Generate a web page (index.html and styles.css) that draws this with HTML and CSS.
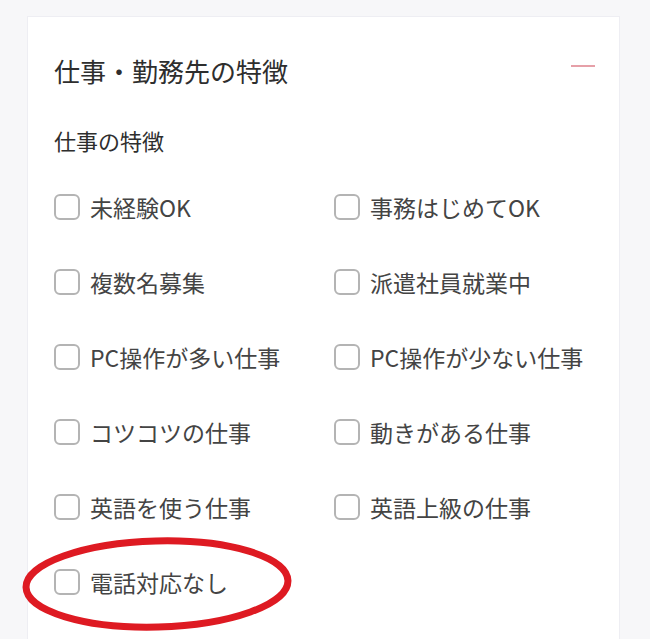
FILE: index.html
```html
<!DOCTYPE html>
<html lang="ja">
  <head>
    <meta charset="UTF-8" />
    <meta name="viewport" content="width=device-width, initial-scale=1.0" />
    <title>仕事・勤務先の特徴</title>
    <link rel="stylesheet" href="styles.css">
  </head>
  <body>
    <section class="card">
      <div class="card-head">
        <h2>仕事・勤務先の特徴</h2>
        <button type="button" class="toggle" aria-label="閉じる"></button>
      </div>

      <h3>仕事の特徴</h3>

      <div class="options">
        <label class="option"><input type="checkbox" name="feature" value="1" />未経験OK</label>
        <label class="option"><input type="checkbox" name="feature" value="2" />事務はじめてOK</label>
        <label class="option"><input type="checkbox" name="feature" value="3" />複数名募集</label>
        <label class="option"><input type="checkbox" name="feature" value="4" />派遣社員就業中</label>
        <label class="option"><input type="checkbox" name="feature" value="5" />PC操作が多い仕事</label>
        <label class="option"><input type="checkbox" name="feature" value="6" />PC操作が少ない仕事</label>
        <label class="option"><input type="checkbox" name="feature" value="7" />コツコツの仕事</label>
        <label class="option"><input type="checkbox" name="feature" value="8" />動きがある仕事</label>
        <label class="option"><input type="checkbox" name="feature" value="9" />英語を使う仕事</label>
        <label class="option"><input type="checkbox" name="feature" value="10" />英語上級の仕事</label>
        <label class="option marked">
          <input type="checkbox" name="feature" value="11" />電話対応なし
          <!-- 赤丸の注釈 -->
          <svg class="circle" width="272" height="96" viewBox="0 0 272 96">
            <ellipse cx="136" cy="48" rx="131" ry="43" transform="rotate(-1.5 136 48)" />
          </svg>
        </label>
      </div>
    </section>
  </body>
</html>
```

FILE: styles.css
```css
html,
body {
  height: 100%;
}
body {
  margin: 0;
  padding: 16px 0 0 27px;
  box-sizing: border-box;
  background-color: #f7f7f9;
  font-family: "Noto Sans CJK JP", "Noto Sans", sans-serif;
  color: #333;
  overflow: hidden;
}
.card {
  width: 593px;
  height: 100%;
  background-color: white;
  border: 1px solid #eeeef3;
  border-bottom: none;
  box-sizing: border-box;
  padding: 39px 24px 0 26px;
}
.card-head {
  display: flex;
  justify-content: space-between;
  align-items: center;
  height: 30px;
}
.card-head h2 {
  margin: 0;
  font-size: 26px;
  font-weight: 400;
  line-height: 30px;
  color: #2e2e2e;
}
.toggle {
  width: 24px;
  height: 2px;
  padding: 0;
  border: none;
  background-color: #e6a0a8;
  margin-top: -10px;
  cursor: pointer;
}
h3 {
  margin: 39px 0 0;
  font-size: 22px;
  font-weight: 400;
  line-height: 30px;
  color: #2e2e2e;
}

/* チェックボックス一覧 */
.options {
  margin-top: 14px;
  display: grid;
  grid-template-columns: 280px 1fr;
  grid-auto-rows: 75px;
}
.option {
  display: flex;
  align-items: center;
  gap: 10px;
  font-size: 23px;
  color: #444;
  cursor: pointer;
}
.option input {
  appearance: none;
  -webkit-appearance: none;
  margin: 0;
  width: 26px;
  height: 26px;
  border: 2px solid #b4b4b4;
  border-radius: 6px;
  background-color: white;
  flex-shrink: 0;
}
.marked {
  position: relative;
}
.circle {
  position: absolute;
  left: -33px;
  top: -8px;
  pointer-events: none;
}
.circle ellipse {
  fill: none;
  stroke: #de1a22;
  stroke-width: 7;
}
```
